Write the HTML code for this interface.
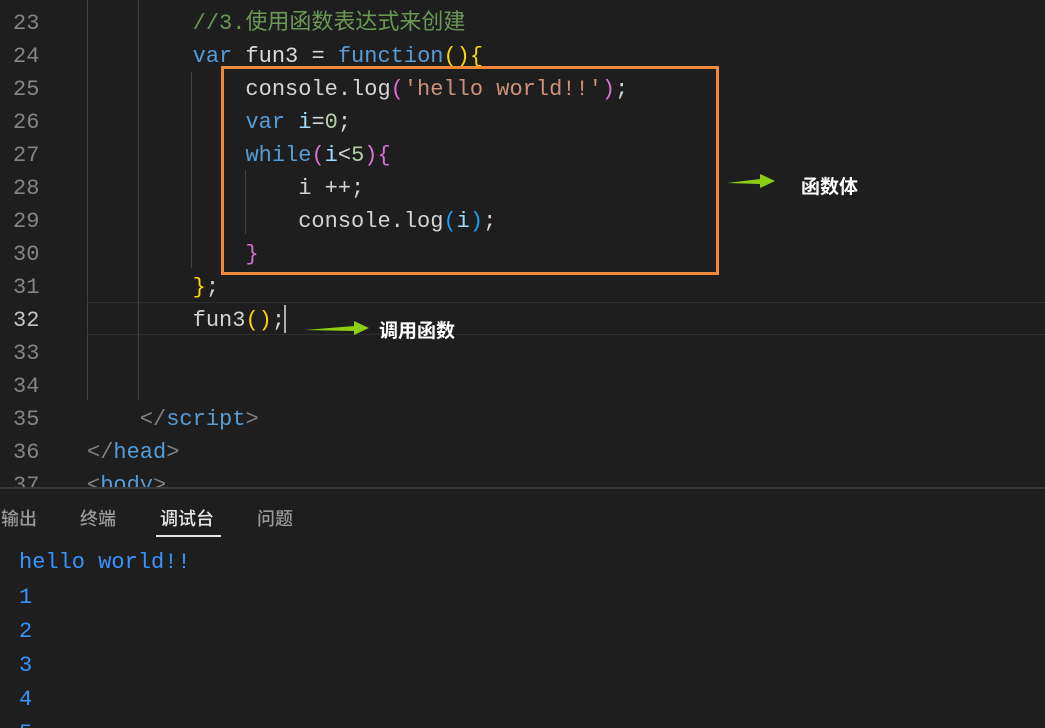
<!DOCTYPE html>
<html><head><meta charset="utf-8"><style>
html,body{margin:0;padding:0;background:#1e1e1e;width:1045px;height:728px;overflow:hidden;position:relative}
.m{font-family:"Liberation Mono","Noto Sans CJK SC",monospace;font-size:22px;white-space:pre;position:absolute;line-height:33px}
.ln{color:#858585;left:13px}
.c{color:#d4d4d4}
.k{color:#569cd6}.cm{color:#6a9955}.y{color:#ffd700}.s{color:#ce9178}.p{color:#da70d6}.v{color:#9cdcfe}.n{color:#b5cea8}.b{color:#179fff}.g{color:#808080}
.guide{position:absolute;width:1px;background:#404040}
.lab{position:absolute;color:#fff;font-family:"Noto Sans CJK SC",sans-serif;font-weight:bold;font-size:19px}
.tab{position:absolute;top:505px;font-family:"Noto Sans CJK SC",sans-serif;font-size:18px;font-weight:500;color:#9a9a9a}
.o{position:absolute;left:19px;font-family:"Liberation Mono",monospace;font-size:22px;color:#3794ff;line-height:34px}
</style></head><body>
<div class="guide" style="left:87px;top:0;height:400px"></div>
<div class="guide" style="left:138px;top:0;height:400px"></div>
<div class="guide" style="left:191px;top:72px;height:196px"></div>
<div class="guide" style="left:245px;top:170px;height:64px"></div>
<div style="position:absolute;left:87px;top:302px;width:958px;height:31px;border-top:1px solid #2e2e2e;border-bottom:1px solid #2e2e2e"></div>
<div class="m ln" style="top:7px">23
24
25
26
27
28
29
30
31
<span style="color:#c6c6c6">32</span>
33
34
35
36
37</div>
<div class="m c" style="left:87px;top:7px">        <span class="cm">//3.使用函数表达式来创建</span>
        <span class="k">var</span> <span style="color:#dcdcdc">fun3</span> = <span class="k">function</span><span class="y">(){</span>
            console.log<span class="p">(</span><span class="s">'hello world!!'</span><span class="p">)</span>;
            <span class="k">var</span> <span class="v">i</span>=<span class="n">0</span>;
            <span class="k">while</span><span class="p">(</span><span class="v">i</span>&lt;<span class="n">5</span><span class="p">){</span>
                i ++;
                console.log<span class="b">(</span><span class="v">i</span><span class="b">)</span>;
            <span class="p">}</span>
        <span class="y">}</span>;
        fun3<span class="y">()</span>;


    <span class="g">&lt;/</span><span class="k">script</span><span class="g">&gt;</span>
<span class="g">&lt;/</span><span class="k">head</span><span class="g">&gt;</span>
<span class="g">&lt;</span><span class="k">body</span><span class="g">&gt;</span></div>
<div style="position:absolute;left:284px;top:305px;width:2px;height:28px;background:#aeafad"></div>
<div style="position:absolute;left:221px;top:66px;width:492px;height:203px;border:3px solid #f08a3a"></div>
<svg style="position:absolute;left:0;top:0" width="1045" height="728">
<path d="M727 183 L760 179 L760 174 L775 181 L760 188 L760 184 Z" fill="#8ccf12"/>
<path d="M305 330 L354 326 L354 321 L369 328 L354 335 L354 331 Z" fill="#8ccf12"/>
</svg>
<div class="lab" style="left:801px;top:172px">函数体</div>
<div class="lab" style="left:379px;top:316px">调用函数</div>
<div style="position:absolute;left:0;top:487px;width:1045px;height:241px;background:#1e1e1e;border-top:2px solid #3a3a3a"></div>
<div class="tab" style="left:1px">输出</div>
<div class="tab" style="left:80px">终端</div>
<div class="tab" style="left:160px;color:#e7e7e7">调试台</div>
<div style="position:absolute;left:156px;top:535px;width:65px;height:2px;background:#e7e7e7"></div>
<div class="tab" style="left:257px">问题</div>
<div class="o" style="top:546px">hello world!!</div>
<div class="o" style="top:581px">1</div>
<div class="o" style="top:615px">2</div>
<div class="o" style="top:649px">3</div>
<div class="o" style="top:683px">4</div>
<div class="o" style="top:717px">5</div>
</body></html>
